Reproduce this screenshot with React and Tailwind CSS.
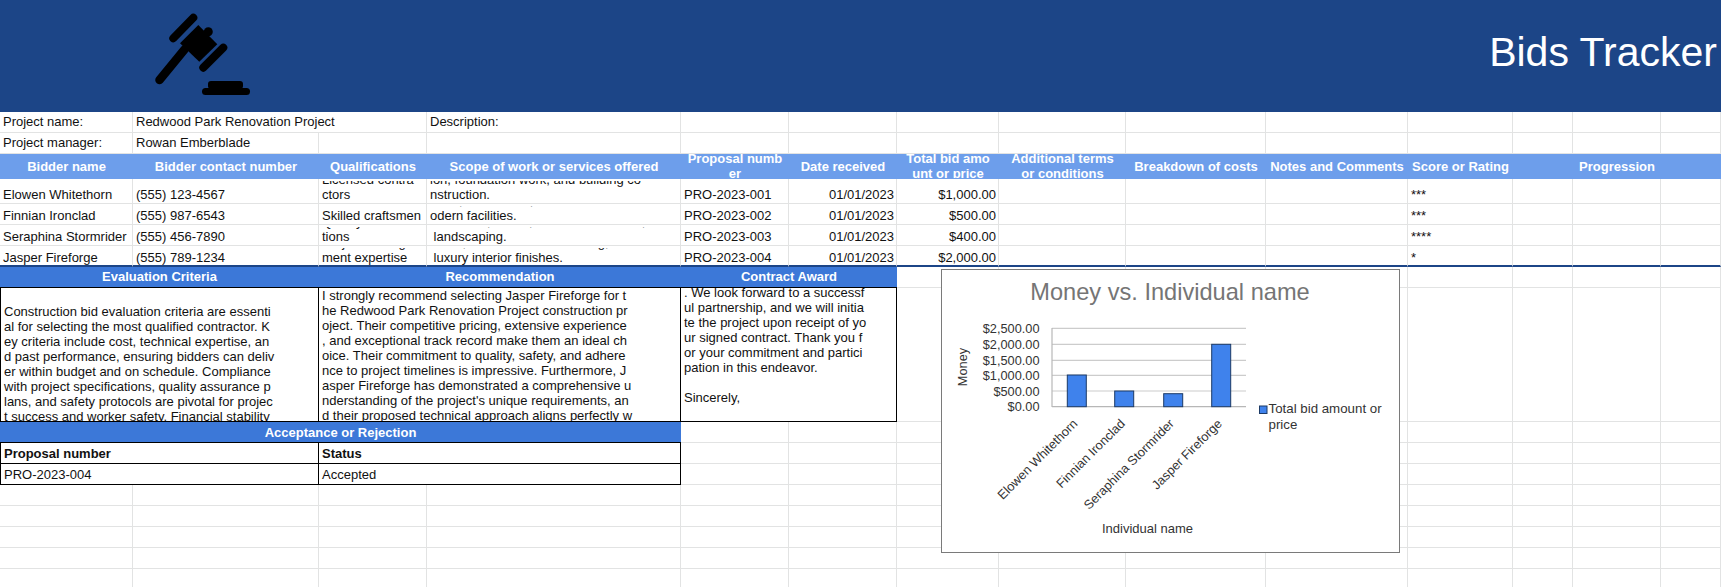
import { Fragment } from "react";

const line = "border-r border-b border-[#e2e3e3]";
const ink = "border-r border-b border-black";
const headerLight = "bg-[#6d9eeb] text-white font-bold text-center pb-[1px]";
const headerDark = "bg-[#3c78d8] text-white font-bold text-center border-b border-black";

const bidders = [
  {
    name: "Elowen Whitethorn",
    phone: "(555) 123-4567",
    qual: ["Licensed contra", "ctors"],
    scope: ["ion, foundation work, and building co", "nstruction."],
    proposal: "PRO-2023-001",
    amount: "$1,000.00",
    score: "***",
  },
  {
    name: "Finnian Ironclad",
    phone: "(555) 987-6543",
    qual: ["Skilled craftsmen"],
    scope: ["Build, rehabilitate, and renew into m", "odern facilities."],
    proposal: "PRO-2023-002",
    amount: "$500.00",
    score: "***",
  },
  {
    name: "Seraphina Stormrider",
    phone: "(555) 456-7890",
    qual: ["Quality certifica", "tions"],
    scope: [" Site work, drives, and outdoor areas,", " landscaping."],
    proposal: "PRO-2023-003",
    amount: "$400.00",
    score: "****",
  },
  {
    name: "Jasper Fireforge",
    phone: "(555) 789-1234",
    qual: ["Project manage", "ment expertise"],
    scope: [" Build, fine homes and flooring,", " luxury interior finishes."],
    proposal: "PRO-2023-004",
    amount: "$2,000.00",
    score: "*",
  },
];

const headers = [
  ["Bidder name"],
  ["Bidder contact number"],
  ["Qualifications"],
  ["Scope of work or services offered"],
  ["Proposal numb", "er"],
  ["Date received"],
  ["Total bid amo", "unt or price"],
  ["Additional terms", "or conditions"],
  ["Breakdown of costs"],
  ["Notes and Comments"],
  ["Score or Rating"],
  [""],
  ["Progression"],
  [""],
];

const evaluation = [
  " ",
  "Construction bid evaluation criteria are essenti",
  "al for selecting the most qualified contractor. K",
  "ey criteria include cost, technical expertise, an",
  "d past performance, ensuring bidders can deliv",
  "er within budget and on schedule. Compliance",
  "with project specifications, quality assurance p",
  "lans, and safety protocols are pivotal for projec",
  "t success and worker safety. Financial stability",
];

const recommendation = [
  "I strongly recommend selecting Jasper Fireforge for t",
  "he Redwood Park Renovation Project construction pr",
  "oject. Their competitive pricing, extensive experience",
  ", and exceptional track record make them an ideal ch",
  "oice. Their commitment to quality, safety, and adhere",
  "nce to project timelines is impressive. Furthermore, J",
  "asper Fireforge has demonstrated a comprehensive u",
  "nderstanding of the project's unique requirements, an",
  "d their proposed technical approach aligns perfectly w",
];

const award = [
  ". We look forward to a successf",
  "ul partnership, and we will initia",
  "te the project upon receipt of yo",
  "ur signed contract. Thank you f",
  "or your commitment and partici",
  "pation in this endeavor.",
  " ",
  "Sincerely,",
  " ",
];

// outer box carries border/background, inner box clips the text like a sheet cell
function Cell({ lines = [], className = "", inner = "justify-center" }) {
  return (
    <div className={`flex flex-col min-h-0 ${className}`}>
      <div className={`flex flex-col flex-1 min-h-0 overflow-hidden px-[3px] ${inner}`}>
        {lines.map((text, i) => (
          <div key={i} className="whitespace-pre shrink-0">
            {text}
          </div>
        ))}
      </div>
    </div>
  );
}

function Blanks({ count, className = line }) {
  return Array.from({ length: count }, (_, i) => <div key={i} className={className} />);
}

function Gavel() {
  return (
    <svg width="100" height="87" viewBox="0 0 100 87" fill="#000">
      <line x1="4.5" y1="67" x2="29.7" y2="36.3" stroke="#000" strokeWidth="8.5" strokeLinecap="round" />
      <line x1="18.3" y1="25.3" x2="38.3" y2="4.7" stroke="#000" strokeWidth="8" strokeLinecap="round" />
      <line x1="48.3" y1="54.7" x2="68.3" y2="34.7" stroke="#000" strokeWidth="8" strokeLinecap="round" />
      <polygon points="25,30.3 43.3,12 62.3,31.3 44.3,48.7" />
      <circle cx="53.3" cy="18.7" r="4.5" />
      <rect x="53" y="68" width="35" height="8" rx="3" />
      <rect x="47" y="75" width="48" height="7" rx="3.5" />
    </svg>
  );
}

function Chart() {
  const left = 110;
  const right = 304;
  const grid = [58.3, 74.3, 90.3, 105.3, 121, 136.7];
  const ticks = ["$2,500.00", "$2,000.00", "$1,500.00", "$1,000.00", "$500.00", "$0.00"];
  const bars = [
    { x: 125.3, top: 105, name: "Elowen Whitethorn" },
    { x: 172.7, top: 121, name: "Finnian Ironclad" },
    { x: 221.7, top: 123.7, name: "Seraphina Stormrider" },
    { x: 269.7, top: 74.3, name: "Jasper Fireforge" },
  ];

  return (
    <div className="absolute left-[941px] top-[269px] w-[459px] h-[284px] bg-white border border-[#7a7a7a]">
      <svg width="457" height="282" viewBox="0 0 457 282" className="block" fontFamily="Liberation Sans, Arial, sans-serif">
        <text x="228" y="30" textAnchor="middle" fontSize="23.6" fill="#757575">
          Money vs. Individual name
        </text>
        {grid.map((y, i) => (
          <Fragment key={y}>
            <line x1={left} x2={right} y1={y} y2={y} stroke={i === 5 ? "#b7b7b7" : "#cccccc"} strokeWidth="1.2" />
            <text x="97.5" y={y + 4.5} textAnchor="end" fontSize="12.75" fill="#333">
              {ticks[i]}
            </text>
          </Fragment>
        ))}
        <line x1={left} x2={left} y1="58" y2="137" stroke="#b7b7b7" strokeWidth="1.2" />
        <text transform="translate(25 97) rotate(-90)" textAnchor="middle" fontSize="12.75" fill="#333">
          Money
        </text>
        {bars.map((bar) => (
          <Fragment key={bar.name}>
            <rect x={bar.x} y={bar.top} width="19" height={136.7 - bar.top} fill="#3f82ec" stroke="#1c3a66" strokeWidth="1" />
            <text
              transform={`translate(${bar.x + 11} 154.5) rotate(-45)`}
              textAnchor="end"
              fontSize="12.75"
              fill="#333"
            >
              {bar.name}
            </text>
          </Fragment>
        ))}
        <text x="205.5" y="263" textAnchor="middle" fontSize="13" fill="#333">
          Individual name
        </text>
        <rect x="317.5" y="136" width="7.5" height="7.5" fill="#3f82ec" stroke="#1c3a66" strokeWidth="1" />
        <text x="326.5" y="142.5" fontSize="13.3" fill="#333">
          Total bid amount or
        </text>
        <text x="326.5" y="159" fontSize="13.3" fill="#333">
          price
        </text>
      </svg>
    </div>
  );
}

export default function App() {
  return (
    <div className="relative h-[587px] w-full overflow-hidden bg-white font-['Liberation_Sans',Arial,sans-serif] text-[13px] leading-[15px] text-[#111]">
      <div className="flex h-[112px] w-[1721px] items-center justify-between bg-[#1c4587] pl-[155px] pr-[4px]">
        <Gavel />
        <div className="pb-[9px] text-[41px] leading-[46px] text-white">Bids Tracker</div>
      </div>

      <div className="grid w-[1721px] grid-cols-[133px_186px_108px_254px_108px_108px_102px_127px_140px_142px_105px_60px_88px_60px] grid-rows-[21px_21px_25px_25px_21px_21px_21px_21px_134px_21px_21px_21px_21px_21px_21px_21px_21px]">
        {/* Project info */}
        <Cell lines={["Project name:"]} className={`${line} pb-[2px]`} />
        <Cell lines={["Redwood Park Renovation Project"]} className={`${line} col-span-2 pb-[2px]`} />
        <Cell lines={["Description:"]} className={`${line} pb-[2px]`} />
        <Blanks count={10} />
        <Cell lines={["Project manager:"]} className={`${line} pb-[2px]`} />
        <Cell lines={["Rowan Emberblade"]} className={`${line} pb-[2px]`} />
        <Blanks count={12} />

        {/* Bid table */}
        {headers.map((lines, i) => (
          <Cell key={i} lines={lines} className={headerLight} />
        ))}
        {bidders.map((b, i) => {
          const row = i === bidders.length - 1 ? "border-r border-[#e2e3e3] border-b-2 border-b-[#1c4587] pt-[2px]" : `${line} pt-[2px] pb-[1px]`;
          return (
            <Fragment key={b.proposal}>
              <Cell lines={[b.name]} className={row} inner="justify-end" />
              <Cell lines={[b.phone]} className={row} inner="justify-end" />
              <Cell lines={b.qual} className={row} inner="justify-end" />
              <Cell lines={b.scope} className={row} inner="justify-end" />
              <Cell lines={[b.proposal]} className={row} inner="justify-end" />
              <Cell lines={["01/01/2023"]} className={`${row} text-right`} inner="justify-end pr-[2px]" />
              <Cell lines={[b.amount]} className={`${row} text-right`} inner="justify-end pr-[2px]" />
              <Blanks count={3} className={row} />
              <Cell lines={[b.score]} className={row} inner="justify-end" />
              <Blanks count={3} className={row} />
            </Fragment>
          );
        })}

        {/* Evaluation, recommendation and award */}
        <Cell lines={["Evaluation Criteria"]} className={`${headerDark} col-span-2 pb-[2px]`} />
        <Cell lines={["Recommendation"]} className={`${headerDark} col-span-2 pb-[2px]`} />
        <Cell lines={["Contract Award"]} className={`${headerDark} col-span-2 pb-[2px]`} />
        <Blanks count={8} />
        <Cell lines={evaluation} className={`${ink} border-l col-span-2 pt-[1px]`} inner="justify-start" />
        <Cell lines={recommendation} className={`${ink} col-span-2`} inner="justify-start" />
        <Cell lines={award} className={`${ink} col-span-2 pb-[1px]`} inner="justify-end" />
        <Blanks count={8} />

        {/* Acceptance or rejection */}
        <Cell lines={["Acceptance or Rejection"]} className={`${headerDark} col-span-4`} />
        <Blanks count={10} />
        <Cell lines={["Proposal number"]} className={`${ink} border-l col-span-2 font-bold pt-[1px]`} />
        <Cell lines={["Status"]} className={`${ink} col-span-2 font-bold pt-[1px]`} />
        <Blanks count={10} />
        <Cell lines={["PRO-2023-004"]} className={`${ink} border-l col-span-2 pt-[1px]`} />
        <Cell lines={["Accepted"]} className={`${ink} col-span-2 pt-[1px]`} />
        <Blanks count={10} />
        <Blanks count={14 * 5} />
      </div>

      <Chart />
    </div>
  );
}
